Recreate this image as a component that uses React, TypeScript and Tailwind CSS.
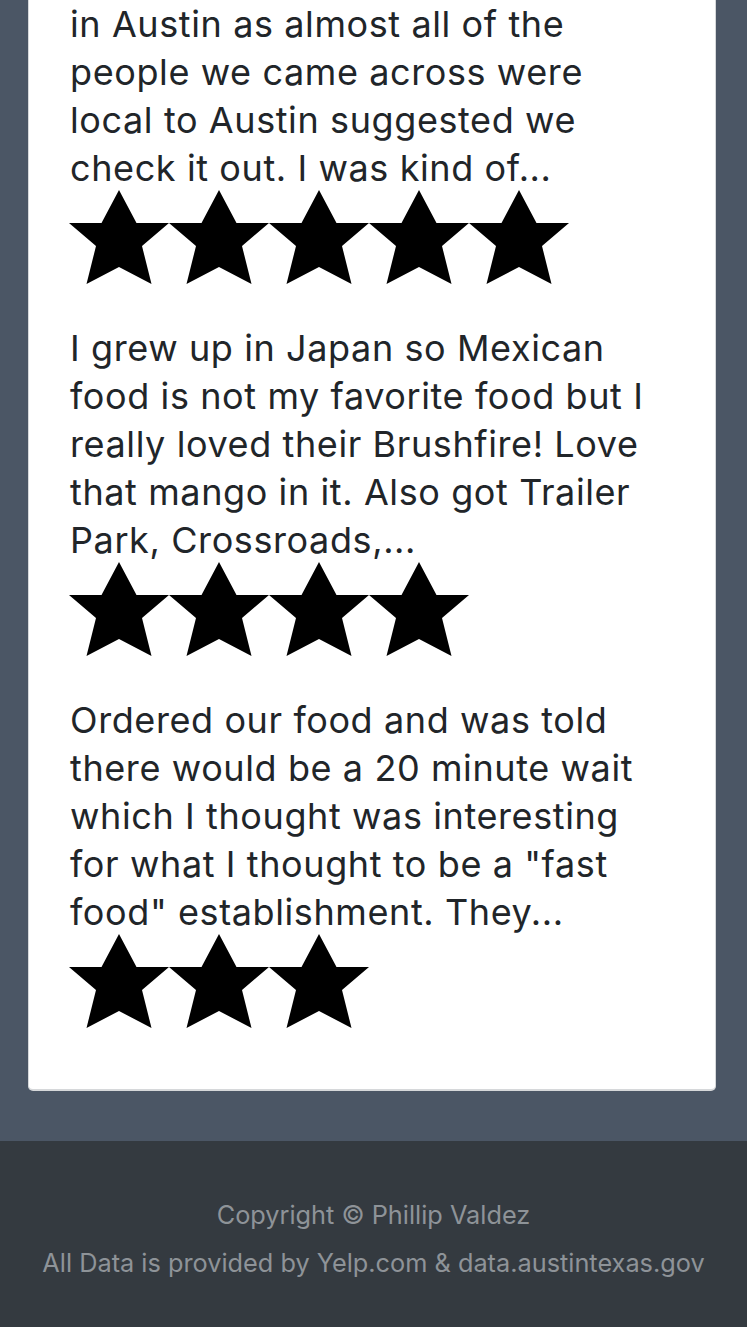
import React from "react";

const Star = () => (
  <svg width="100" height="100" viewBox="0 0 100 100" className="block shrink-0 overflow-visible">
    <polygon
      points="49,-2 66.5,31 99,31 72,54 81.5,92 49,75 16.5,92 26,54 -1,31 31.5,31"
      fill="#000"
    />
  </svg>
);

const Stars = ({ n }: { n: number }) => (
  <div className="flex">
    {Array.from({ length: n }).map((_, i) => (
      <Star key={i} />
    ))}
  </div>
);

const Review = ({ lines, stars }: { lines: string[]; stars: number }) => (
  <div>
    <div className="text-[36px] leading-[48px] tracking-[0.6px] text-[#212529]">
      {lines.map((l, i) => (
        <div key={i} className="whitespace-nowrap">
          {l}
        </div>
      ))}
    </div>
    <Stars n={stars} />
  </div>
);

export default function App() {
  return (
    <div
      className="min-h-[1327px] flex flex-col bg-[#4b5665]"
      style={{ fontFamily: "Inter, 'Noto Sans', sans-serif" }}
    >
      <div className="pl-[28px] pr-[31px] pt-0 pb-[50px]">
        <div className="bg-white rounded-b-[5px] border border-t-0 border-[#d6d8da] border-b-2 pl-[41px] pr-6 pb-[53px] flex flex-col gap-[32px]">
          <Review
            stars={5}
            lines={[
              "in Austin as almost all of the",
              "people we came across were",
              "local to Austin suggested we",
              "check it out. I was kind of...",
            ]}
          />
          <Review
            stars={4}
            lines={[
              "I grew up in Japan so Mexican",
              "food is not my favorite food but I",
              "really loved their Brushfire! Love",
              "that mango in it. Also got Trailer",
              "Park, Crossroads,...",
            ]}
          />
          <Review
            stars={3}
            lines={[
              "Ordered our food and was told",
              "there would be a 20 minute wait",
              "which I thought was interesting",
              'for what I thought to be a "fast',
              'food" establishment. They...',
            ]}
          />
        </div>
      </div>
      <footer className="flex-1 bg-[#343a40] pt-[56px] pb-[40px] text-center text-[25.3px] leading-[36px] text-[#8e9398]">
        <p className="mb-[12px]">Copyright © Phillip Valdez</p>
        <p>All Data is provided by Yelp.com &amp; data.austintexas.gov</p>
      </footer>
    </div>
  );
}
